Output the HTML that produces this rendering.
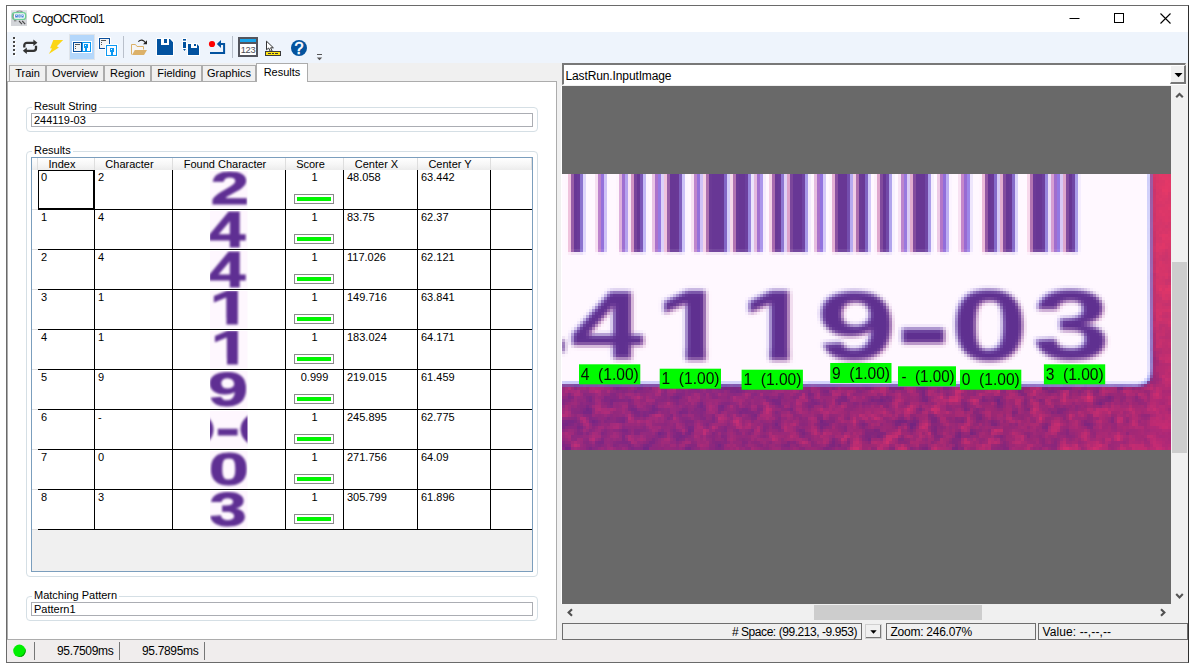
<!DOCTYPE html>
<html>
<head>
<meta charset="utf-8">
<title>CogOCRTool1</title>
<style>
html,body{margin:0;padding:0;background:#fff;}
body{width:1196px;height:665px;overflow:hidden;position:relative;font-family:"Liberation Sans",sans-serif;font-size:11px;color:#000;}
.abs{position:absolute;}
#win{position:absolute;left:6px;top:5px;width:1181px;height:656px;border:1px solid #6a6a6a;border-right-color:#2e2e2e;background:#f0f0f0;overflow:hidden;}
#pg{position:absolute;left:-7px;top:-6px;width:1196px;height:665px;}
#title{left:7px;top:6px;width:1181px;height:26px;background:#fff;}
#title .t{position:absolute;left:25.5px;top:5px;font-size:12px;line-height:16px;letter-spacing:-0.5px;white-space:nowrap;}
#tb{left:7px;top:32px;width:1181px;height:31px;background:#eef4fc;}
.tab{position:absolute;top:65px;height:16px;border:1px solid #acacac;border-bottom:none;background:#f0f0f0;font-size:11px;line-height:15px;text-align:center;white-space:nowrap;box-sizing:border-box;}
#tabsel{position:absolute;top:63px;height:19px;border:1px solid #acacac;border-bottom:none;background:#fff;font-size:11px;line-height:16px;text-align:center;box-sizing:border-box;z-index:3;}
#panel{left:7px;top:81px;width:550px;height:559px;background:#fff;border:1px solid #acacac;box-sizing:border-box;}
.gb{position:absolute;border:1px solid #d5dfe5;border-radius:4px;box-sizing:border-box;}
.gbl{position:absolute;background:#fff;font-size:11px;line-height:13px;padding:0 2px 0 2px;white-space:nowrap;}
.tf{position:absolute;border:1px solid #abadb3;background:#fff;box-sizing:border-box;font-size:11px;line-height:12px;padding-left:2px;white-space:nowrap;}
#grid{left:31px;top:157px;width:502px;height:415px;border:1px solid #7b9ebd;background:#f0f0f0;box-sizing:border-box;overflow:hidden;}
.hd{position:absolute;height:12px;font-size:11px;line-height:12px;text-align:center;background:linear-gradient(#fff,#f6f6f6 55%,#ececec);border-right:1px solid #dedede;box-sizing:border-box;white-space:nowrap;}
.rh{position:absolute;left:32px;width:6px;height:40px;background:#fff;border-bottom:1px solid #e0e0e0;box-sizing:border-box;}
.cell{position:absolute;background:#fff;border-right:1px solid #000;border-bottom:1px solid #000;box-sizing:border-box;font-size:11px;line-height:12px;white-space:nowrap;overflow:hidden;}
.sc{position:absolute;left:0;width:57px;top:1px;text-align:center;}
.bar{position:absolute;left:8px;top:24px;width:40px;height:10px;border:1px solid #8a8a8a;background:#fff;box-sizing:border-box;}
.bar i{position:absolute;left:2px;top:2px;width:34px;height:4px;background:#00f800;}
.fc{position:absolute;left:37px;top:0;width:38px;height:39px;background:#fdf2fd;overflow:hidden;}
.fc .g{position:absolute;left:0;top:0;width:38px;text-align:center;font-weight:bold;font-size:52px;line-height:39px;color:#673494;transform:scaleX(1.35);filter:blur(0.6px);}
.sb{position:absolute;border:1px solid #6e6e6e;background:#f0f0f0;box-sizing:border-box;font-size:12px;line-height:15px;padding-top:1px;white-space:nowrap;}
.lab{position:absolute;background:#00e400;font-size:14.5px;line-height:17px;white-space:pre;color:#111;}
</style>
</head>
<body>
<div id="win"><div id="pg">

<!-- title bar -->
<div id="title" class="abs">
  <svg class="abs" style="left:4px;top:4px" width="16" height="16" viewBox="0 0 16 16">
    <defs><linearGradient id="ig" x1="0" x2="0" y1="0" y2="1"><stop offset="0" stop-color="#e4e6ea"/><stop offset="0.5" stop-color="#d0d2d7"/><stop offset="1" stop-color="#d4d6da"/></linearGradient></defs>
    <rect x="0" y="0" width="16" height="16" fill="url(#ig)"/>
    <rect x="1.400" y="2.600" width="13.200" height="6.800" rx="2.400" fill="#fff" stroke="#6fcf97" stroke-width="1.400"/>
    <path d="M2.700 3.800Q1.900 6.200 2.900 8.800" stroke="#666" stroke-width="0.700" fill="none"/>
    <path d="M5.500 1.500Q8.500 0.500 11.500 1.500" stroke="#666" stroke-width="0.800" fill="none"/>
    <path d="M4.200 4.400h2.600v3.200H4.200zM7.400 4.400h2.200v3.200H7.400zM10.400 4.400h2.200v3.200h-2.200z" fill="#2a6fd0" opacity="0.900"/>
    <path d="M5 5.400h1M8 6h1M11 5.600h1" stroke="#fff" stroke-width="0.800"/>
    <path d="M8 11l3 3.200M11.200 11l3 3.200" stroke="#4a4a4a" stroke-width="1.100"/>
    <path d="M3 10.800h2.400" stroke="#666" stroke-width="0.900"/>
  </svg>
  <div class="t">CogOCRTool1</div>
  <svg class="abs" style="left:1062px;top:0" width="119" height="26" viewBox="0 0 119 26">
    <path d="M0.5 12.5h10" stroke="#000" stroke-width="1"/>
    <rect x="45.5" y="7.5" width="9" height="9" fill="none" stroke="#000" stroke-width="1"/>
    <path d="M91.5 7.5l10 10M101.5 7.5l-10 10" stroke="#000" stroke-width="1.1"/>
  </svg>
</div>

<!-- toolbar -->
<div id="tb" class="abs"></div>
<svg class="abs" style="left:7px;top:32px" width="330" height="31" viewBox="7 32 330 31">
  <!-- grip -->
  <g fill="#fff"><rect x="14" y="38" width="2" height="2"/><rect x="14" y="42" width="2" height="2"/><rect x="14" y="46" width="2" height="2"/><rect x="14" y="50" width="2" height="2"/><rect x="14" y="54" width="2" height="2"/></g>
  <g fill="#464646"><rect x="13" y="37" width="2" height="2"/><rect x="13" y="41" width="2" height="2"/><rect x="13" y="45" width="2" height="2"/><rect x="13" y="49" width="2" height="2"/><rect x="13" y="53" width="2" height="2"/></g>
  <!-- refresh / loop -->
  <g fill="none" stroke="#333" stroke-width="2.300" stroke-linejoin="round">
    <path d="M24.300 47.600v-2.200a2.600 2.600 0 0 1 2.600-2.600h7.400"/>
    <path d="M36 45.800v2.400a2.600 2.600 0 0 1-2.600 2.600h-7.400"/>
  </g>
  <path d="M33.400 39.600l4 3.200l-4 3.200z" fill="#333"/>
  <path d="M26.800 47.600l-4 3.200l4 3.200z" fill="#333"/>
  <!-- lightning -->
  <path d="M53.300 39.900h9.900l-6.400 6.300l2.100 1.200l-10.100 6.700l3.200-5.600l-1.900-0.300z" fill="#fbd616"/>
  <!-- selected button -->
  <rect x="69.5" y="34.5" width="25" height="25" fill="#b4d7fb" stroke="#dfe4ea" stroke-width="1"/>
  <!-- split view icon -->
  <rect x="72" y="41" width="20" height="12" fill="#fff"/>
  <rect x="82.5" y="42.5" width="8" height="9" fill="#fafcff" stroke="#0a98f2"/>
  <rect x="73.5" y="42.5" width="8" height="9" fill="#f4f4f4" stroke="#0b4f9d"/>
  <rect x="75" y="44" width="5" height="1" fill="#555"/><rect x="75" y="46" width="1" height="1" fill="#555"/><rect x="75" y="48" width="1" height="1" fill="#555"/>
  <path d="M84 44h4v4h-1v4h-2v-4h-1z" fill="#0a98f2"/><rect x="85" y="45" width="1" height="1" fill="#fff"/>
  <!-- floating icon -->
  <rect x="98" y="37" width="13" height="13" fill="#fff"/>
  <rect x="99.500" y="38.500" width="10" height="10" fill="#f4f4f4" stroke="#0b4f9d"/>
  <rect x="101" y="40" width="5" height="1" fill="#555"/><rect x="101" y="42" width="1" height="1" fill="#555"/><rect x="101" y="44" width="1" height="1" fill="#555"/>
  <rect x="105" y="44" width="13" height="13" fill="#fff"/>
  <rect x="106.500" y="45.500" width="10" height="10" fill="#fafcff" stroke="#0a98f2"/>
  <path d="M110 48h4v4h-1v4h-2v-4h-1z" fill="#0a98f2"/><rect x="111" y="49" width="1" height="1" fill="#fff"/>
  <!-- separator -->
  <rect x="123" y="36" width="1" height="22" fill="#b9c0cb"/>
  <!-- open folder -->
  <path d="M131.500 54.500v-10h4l1.500 2h6.500v3" fill="#f6f6f6" stroke="#dcb169" stroke-width="1"/>
  <path d="M132 55l2.800-5h12.200l-3 5z" fill="#dcb169"/>
  <path d="M138.300 41.600q3.800-3.600 7.400 1.400" fill="none" stroke="#222" stroke-width="1.100"/>
  <path d="M147 40.200v4h-4z" fill="#222"/>
  <!-- save -->
  <path d="M156 38h14.500l3.500 3.500v14.500h-18z" fill="#fff"/>
  <path d="M157 39h4v6h8v-6h1l3 3.200v12.800h-16z" fill="#02529f"/>
  <rect x="164" y="39" width="3" height="4" fill="#02529f"/>
  <!-- save as -->
  <path d="M182 38h5v11l-2.500 3l-2.500-3z" fill="#fff"/>
  <rect x="183" y="39" width="3" height="1.600" fill="#02529f"/>
  <rect x="183" y="42" width="3" height="6" fill="#02529f"/>
  <path d="M183 49h3l-1.500 2z" fill="#02529f"/>
  <path d="M187 43h10.500l2.500 2.500v10.500h-13z" fill="#fff"/>
  <path d="M188 44h3v4h6v-4l2 2.200v8.800h-11z" fill="#02529f"/>
  <rect x="194" y="44" width="2" height="2" fill="#02529f"/>
  <!-- red dot + return arrow -->
  <circle cx="212" cy="44" r="3.100" fill="#ff0000"/>
  <path d="M210 52.900h14.100v-9h-3.500" fill="none" stroke="#02529f" stroke-width="2"/>
  <path d="M216.800 44l4.200-4v8z" fill="#02529f"/>
  <!-- separator -->
  <rect x="232" y="36" width="1" height="22" fill="#b9c0cb"/>
  <!-- 123 icon -->
  <rect x="238" y="37" width="20" height="20" fill="#53555e"/>
  <rect x="240" y="39" width="16" height="3" fill="#18a5ec"/>
  <rect x="240" y="44" width="16" height="11" fill="#fff"/>
  <text x="248" y="53" font-family="Liberation Sans, sans-serif" font-size="9.300" text-anchor="middle" fill="#4a4c55" letter-spacing="-0.400">123</text>
  <!-- pointer + ruler -->
  <path d="M266.500 41.200v8.600l2.200-1.800l1.500 3.300h2l-1.600-3.500h2.800z" fill="#fff" stroke="#333" stroke-width="1"/>
  <rect x="265.500" y="51.500" width="15" height="4" fill="#ffe512" stroke="#3a3a3a" stroke-width="1"/>
  <path d="M268 53.500h3M272 53.500h2M275 53.500h3" stroke="#3a3a3a" stroke-width="1"/>
  <!-- help -->
  <circle cx="299" cy="48" r="8" fill="#03539e"/>
  <text x="299" y="53.900" font-family="Liberation Sans, sans-serif" font-size="16" text-anchor="middle" fill="#fff" stroke="#fff" stroke-width="0.600">?</text>
  <!-- overflow -->
  <rect x="317" y="54" width="5" height="1" fill="#555"/>
  <path d="M316.800 57.500h5.400l-2.700 2.700z" fill="#555"/>
</svg>


<!-- tabs -->
<div id="panel" class="abs"></div>
<div class="tab" style="left:9px;width:37px">Train</div>
<div class="tab" style="left:46px;width:58px">Overview</div>
<div class="tab" style="left:104px;width:47px">Region</div>
<div class="tab" style="left:151px;width:51px">Fielding</div>
<div class="tab" style="left:202px;width:54px">Graphics</div>
<div id="tabsel" style="left:256px;width:52px">Results</div>


<div class="gb" style="left:26px;top:107px;width:512px;height:25px"></div>
<div class="gbl" style="left:32px;top:100px">Result String</div>
<div class="tf" style="left:31px;top:113px;width:502px;height:14px">244119-03</div>
<div class="gb" style="left:26px;top:151px;width:512px;height:426px"></div>
<div class="gbl" style="left:32px;top:144px">Results</div>
<div class="gb" style="left:26px;top:596px;width:512px;height:25px"></div>
<div class="gbl" style="left:32px;top:589px">Matching Pattern</div>
<div class="tf" style="left:31px;top:602px;width:502px;height:14px">Pattern1</div>
<div id="grid" class="abs"><div class="abs" style="left:-32px;top:-158px">
<div class="hd" style="left:32px;top:158px;width:6px"></div>
<div class="hd" style="left:38px;top:158px;width:57px;padding-right:8px;">Index</div>
<div class="hd" style="left:95px;top:158px;width:78px;padding-right:8px;">Character</div>
<div class="hd" style="left:173px;top:158px;width:113px;padding-right:8px;">Found Character</div>
<div class="hd" style="left:286px;top:158px;width:58px;padding-right:8px;">Score</div>
<div class="hd" style="left:344px;top:158px;width:74px;padding-right:8px;">Center X</div>
<div class="hd" style="left:418px;top:158px;width:73px;padding-right:8px;">Center Y</div>
<div class="hd" style="left:491px;top:158px;width:41px;"></div>
<div class="rh" style="top:170px"></div>
<div class="cell" style="left:38px;top:170px;width:57px;height:40px;padding:1px 0 0 3px">0</div>
<div class="cell" style="left:95px;top:170px;width:78px;height:40px;padding:1px 0 0 3px">2</div>
<div class="cell" style="left:173px;top:170px;width:113px;height:40px"></div>
<div class="cell" style="left:286px;top:170px;width:58px;height:40px;text-align:center;"><span class="sc">1</span><span class="bar"><i></i></span></div>
<div class="cell" style="left:344px;top:170px;width:74px;height:40px;padding:1px 0 0 3px">48.058</div>
<div class="cell" style="left:418px;top:170px;width:73px;height:40px;padding:1px 0 0 3px">63.442</div>
<div class="cell" style="left:491px;top:170px;width:41px;height:40px;border-right:none"></div>
<div class="rh" style="top:210px"></div>
<div class="cell" style="left:38px;top:210px;width:57px;height:40px;padding:1px 0 0 3px">1</div>
<div class="cell" style="left:95px;top:210px;width:78px;height:40px;padding:1px 0 0 3px">4</div>
<div class="cell" style="left:173px;top:210px;width:113px;height:40px"></div>
<div class="cell" style="left:286px;top:210px;width:58px;height:40px;text-align:center;"><span class="sc">1</span><span class="bar"><i></i></span></div>
<div class="cell" style="left:344px;top:210px;width:74px;height:40px;padding:1px 0 0 3px">83.75</div>
<div class="cell" style="left:418px;top:210px;width:73px;height:40px;padding:1px 0 0 3px">62.37</div>
<div class="cell" style="left:491px;top:210px;width:41px;height:40px;border-right:none"></div>
<div class="rh" style="top:250px"></div>
<div class="cell" style="left:38px;top:250px;width:57px;height:40px;padding:1px 0 0 3px">2</div>
<div class="cell" style="left:95px;top:250px;width:78px;height:40px;padding:1px 0 0 3px">4</div>
<div class="cell" style="left:173px;top:250px;width:113px;height:40px"></div>
<div class="cell" style="left:286px;top:250px;width:58px;height:40px;text-align:center;"><span class="sc">1</span><span class="bar"><i></i></span></div>
<div class="cell" style="left:344px;top:250px;width:74px;height:40px;padding:1px 0 0 3px">117.026</div>
<div class="cell" style="left:418px;top:250px;width:73px;height:40px;padding:1px 0 0 3px">62.121</div>
<div class="cell" style="left:491px;top:250px;width:41px;height:40px;border-right:none"></div>
<div class="rh" style="top:290px"></div>
<div class="cell" style="left:38px;top:290px;width:57px;height:40px;padding:1px 0 0 3px">3</div>
<div class="cell" style="left:95px;top:290px;width:78px;height:40px;padding:1px 0 0 3px">1</div>
<div class="cell" style="left:173px;top:290px;width:113px;height:40px"></div>
<div class="cell" style="left:286px;top:290px;width:58px;height:40px;text-align:center;"><span class="sc">1</span><span class="bar"><i></i></span></div>
<div class="cell" style="left:344px;top:290px;width:74px;height:40px;padding:1px 0 0 3px">149.716</div>
<div class="cell" style="left:418px;top:290px;width:73px;height:40px;padding:1px 0 0 3px">63.841</div>
<div class="cell" style="left:491px;top:290px;width:41px;height:40px;border-right:none"></div>
<div class="rh" style="top:330px"></div>
<div class="cell" style="left:38px;top:330px;width:57px;height:40px;padding:1px 0 0 3px">4</div>
<div class="cell" style="left:95px;top:330px;width:78px;height:40px;padding:1px 0 0 3px">1</div>
<div class="cell" style="left:173px;top:330px;width:113px;height:40px"></div>
<div class="cell" style="left:286px;top:330px;width:58px;height:40px;text-align:center;"><span class="sc">1</span><span class="bar"><i></i></span></div>
<div class="cell" style="left:344px;top:330px;width:74px;height:40px;padding:1px 0 0 3px">183.024</div>
<div class="cell" style="left:418px;top:330px;width:73px;height:40px;padding:1px 0 0 3px">64.171</div>
<div class="cell" style="left:491px;top:330px;width:41px;height:40px;border-right:none"></div>
<div class="rh" style="top:370px"></div>
<div class="cell" style="left:38px;top:370px;width:57px;height:40px;padding:1px 0 0 3px">5</div>
<div class="cell" style="left:95px;top:370px;width:78px;height:40px;padding:1px 0 0 3px">9</div>
<div class="cell" style="left:173px;top:370px;width:113px;height:40px"></div>
<div class="cell" style="left:286px;top:370px;width:58px;height:40px;text-align:center;"><span class="sc">0.999</span><span class="bar"><i></i></span></div>
<div class="cell" style="left:344px;top:370px;width:74px;height:40px;padding:1px 0 0 3px">219.015</div>
<div class="cell" style="left:418px;top:370px;width:73px;height:40px;padding:1px 0 0 3px">61.459</div>
<div class="cell" style="left:491px;top:370px;width:41px;height:40px;border-right:none"></div>
<div class="rh" style="top:410px"></div>
<div class="cell" style="left:38px;top:410px;width:57px;height:40px;padding:1px 0 0 3px">6</div>
<div class="cell" style="left:95px;top:410px;width:78px;height:40px;padding:1px 0 0 3px">-</div>
<div class="cell" style="left:173px;top:410px;width:113px;height:40px"></div>
<div class="cell" style="left:286px;top:410px;width:58px;height:40px;text-align:center;"><span class="sc">1</span><span class="bar"><i></i></span></div>
<div class="cell" style="left:344px;top:410px;width:74px;height:40px;padding:1px 0 0 3px">245.895</div>
<div class="cell" style="left:418px;top:410px;width:73px;height:40px;padding:1px 0 0 3px">62.775</div>
<div class="cell" style="left:491px;top:410px;width:41px;height:40px;border-right:none"></div>
<div class="rh" style="top:450px"></div>
<div class="cell" style="left:38px;top:450px;width:57px;height:40px;padding:1px 0 0 3px">7</div>
<div class="cell" style="left:95px;top:450px;width:78px;height:40px;padding:1px 0 0 3px">0</div>
<div class="cell" style="left:173px;top:450px;width:113px;height:40px"></div>
<div class="cell" style="left:286px;top:450px;width:58px;height:40px;text-align:center;"><span class="sc">1</span><span class="bar"><i></i></span></div>
<div class="cell" style="left:344px;top:450px;width:74px;height:40px;padding:1px 0 0 3px">271.756</div>
<div class="cell" style="left:418px;top:450px;width:73px;height:40px;padding:1px 0 0 3px">64.09</div>
<div class="cell" style="left:491px;top:450px;width:41px;height:40px;border-right:none"></div>
<div class="rh" style="top:490px"></div>
<div class="cell" style="left:38px;top:490px;width:57px;height:40px;padding:1px 0 0 3px">8</div>
<div class="cell" style="left:95px;top:490px;width:78px;height:40px;padding:1px 0 0 3px">3</div>
<div class="cell" style="left:173px;top:490px;width:113px;height:40px"></div>
<div class="cell" style="left:286px;top:490px;width:58px;height:40px;text-align:center;"><span class="sc">1</span><span class="bar"><i></i></span></div>
<div class="cell" style="left:344px;top:490px;width:74px;height:40px;padding:1px 0 0 3px">305.799</div>
<div class="cell" style="left:418px;top:490px;width:73px;height:40px;padding:1px 0 0 3px">61.896</div>
<div class="cell" style="left:491px;top:490px;width:41px;height:40px;border-right:none"></div>
<svg class="abs" style="left:173px;top:170px" width="112" height="360" viewBox="0 0 112 360" font-family="Liberation Sans, sans-serif">
<defs><filter id="fb" x="-10%" y="-10%" width="120%" height="120%" color-interpolation-filters="sRGB"><feGaussianBlur stdDeviation="0.8"/></filter><clipPath id="f1"><polygon points="0,-80 37.6,-80 37.6,3 22.6,3 22.6,-13 0,-13"/></clipPath><clipPath id="r0"><rect x="37" y="1" width="37.500" height="37.500"/></clipPath><clipPath id="r1"><rect x="37" y="41" width="37.500" height="37.500"/></clipPath><clipPath id="r2"><rect x="37" y="81" width="37.500" height="37.500"/></clipPath><clipPath id="r3"><rect x="37" y="121" width="37.500" height="37.500"/></clipPath><clipPath id="r4"><rect x="37" y="161" width="37.500" height="37.500"/></clipPath><clipPath id="r5"><rect x="37" y="201" width="37.500" height="37.500"/></clipPath><clipPath id="r6"><rect x="37" y="241" width="37.500" height="37.500"/></clipPath><clipPath id="r7"><rect x="37" y="281" width="37.500" height="37.500"/></clipPath><clipPath id="r8"><rect x="37" y="321" width="37.500" height="37.500"/></clipPath></defs>
<rect x="37" y="1" width="37.500" height="37.500" fill="#fef7fe"/><g clip-path="url(#r0)"><g filter="url(#fb)"><text transform="matrix(0.6882 0 0 0.4597 37.72 34.34)" font-size="100" font-weight="bold" fill="#5f2f93"  stroke="#5f2f93" stroke-width="2">2</text></g></g>
<rect x="37" y="41" width="37.500" height="37.500" fill="#fef7fe"/><g clip-path="url(#r1)"><g filter="url(#fb)"><text transform="matrix(0.6545 0 0 0.5014 35.95 76.60)" font-size="100" font-weight="bold" fill="#5f2f93"  stroke="#5f2f93" stroke-width="2">4</text></g></g>
<rect x="37" y="81" width="37.500" height="37.500" fill="#fef7fe"/><g clip-path="url(#r2)"><g filter="url(#fb)"><text transform="matrix(0.6545 0 0 0.4944 35.95 116.81)" font-size="100" font-weight="bold" fill="#5f2f93"  stroke="#5f2f93" stroke-width="2">4</text></g></g>
<rect x="37" y="121" width="37.500" height="37.500" fill="#fef7fe"/><g clip-path="url(#r3)"><g filter="url(#fb)"><text transform="matrix(0.7531 0 0 0.4803 36.48 154.32)" font-size="100" font-weight="bold" fill="#5f2f93" clip-path="url(#f1)" stroke="#5f2f93" stroke-width="2">1</text></g></g>
<rect x="37" y="161" width="37.500" height="37.500" fill="#fef7fe"/><g clip-path="url(#r4)"><g filter="url(#fb)"><text transform="matrix(0.7219 0 0 0.4718 37.67 194.13)" font-size="100" font-weight="bold" fill="#5f2f93" clip-path="url(#f1)" stroke="#5f2f93" stroke-width="2">1</text></g></g>
<rect x="37" y="201" width="37.500" height="37.500" fill="#fef7fe"/><g clip-path="url(#r5)"><g filter="url(#fb)"><text transform="matrix(0.7200 0 0 0.4726 35.04 236.35)" font-size="100" font-weight="bold" fill="#5f2f93"  stroke="#5f2f93" stroke-width="2">9</text></g></g>
<rect x="37" y="241" width="37.500" height="37.500" fill="#fef7fe"/><g clip-path="url(#r6)"><g filter="url(#fb)"><text transform="matrix(0.7222 0 0 0.4857 42.63 275.13)" font-size="100" font-weight="bold" fill="#5f2f93"  stroke="#5f2f93" stroke-width="2">-</text><ellipse cx="27" cy="259.5" rx="13.500" ry="15" fill="#5f2f93"/><ellipse cx="85" cy="259.3" rx="17.500" ry="16.500" fill="#5f2f93"/></g></g>
<rect x="37" y="281" width="37.500" height="37.500" fill="#fef7fe"/><g clip-path="url(#r7)"><g filter="url(#fb)"><text transform="matrix(0.7224 0 0 0.4671 35.63 314.67)" font-size="100" font-weight="bold" fill="#5f2f93"  stroke="#5f2f93" stroke-width="2">0</text></g></g>
<rect x="37" y="321" width="37.500" height="37.500" fill="#fef7fe"/><g clip-path="url(#r8)"><g filter="url(#fb)"><text transform="matrix(0.6673 0 0 0.4726 36.53 356.35)" font-size="100" font-weight="bold" fill="#5f2f93"  stroke="#5f2f93" stroke-width="2">3</text></g></g>
</svg>
<div class="abs" style="left:38px;top:170px;width:56px;height:39px;border:1px solid #000;box-sizing:border-box"></div>
</div></div>

<div class="abs" style="left:562px;top:63px;width:624px;height:22px;background:#fff;border:1px solid #a0a0a0;border-top:2px solid #787878;border-left:2px solid #787878;border-right-color:#fff;border-bottom-color:#fff;box-sizing:border-box"></div>
<div class="abs" style="left:565.500px;top:68.500px;font-size:12px;line-height:15px;letter-spacing:-0.120px;white-space:nowrap">LastRun.InputImage</div>
<div class="abs" style="left:1170px;top:65px;width:16px;height:19px;background:#f0f0f0;border:1px solid #fff;border-right:2px solid #787878;border-bottom:2px solid #787878;box-sizing:border-box"></div>
<svg class="abs" style="left:1173.500px;top:72px" width="9" height="6" viewBox="0 0 9 6"><path d="M0.500 1h8l-4 4.200z" fill="#000"/></svg>
<div class="abs" style="left:561px;top:86px;width:1px;height:518px;background:#fff"></div>
<div class="abs" style="left:562px;top:86px;width:609px;height:518px;background:#696969"></div>
<svg class="abs" style="left:562px;top:174px" width="609" height="276" viewBox="0 0 609 276" font-family="Liberation Sans, sans-serif">
<defs>
<filter id="bl" x="-10%" y="-10%" width="120%" height="120%" color-interpolation-filters="sRGB"><feGaussianBlur stdDeviation="2"/></filter>
<filter id="bb" x="-5%" y="-5%" width="110%" height="110%" color-interpolation-filters="sRGB"><feGaussianBlur stdDeviation="1.5 1.3"/></filter>
<linearGradient id="tg" x1="0" x2="1" y1="0" y2="0"><stop offset="0" stop-color="#e07ab0"/><stop offset="0.45" stop-color="#8a55c8"/><stop offset="1" stop-color="#7468f0"/></linearGradient>
<filter id="nz" x="0" y="0" width="100%" height="100%" color-interpolation-filters="sRGB"><feTurbulence type="fractalNoise" baseFrequency="0.1" numOctaves="2" seed="7" result="t"/><feColorMatrix in="t" type="matrix" values="0 0 0 0 0.85  0 0 0 0 0.19  0 0 0 0 0.43  2.2 0 0 0 -0.85"/></filter>
<filter id="nz2" x="0" y="0" width="100%" height="100%" color-interpolation-filters="sRGB"><feTurbulence type="fractalNoise" baseFrequency="0.09" numOctaves="2" seed="23" result="t"/><feColorMatrix in="t" type="matrix" values="0 0 0 0 0.43  0 0 0 0 0.14  0 0 0 0 0.50  0 2.2 0 0 -0.85"/></filter>
<linearGradient id="vg" x1="0" x2="1" y1="0" y2="1"><stop offset="0.55" stop-color="#7a2a98" stop-opacity="0.25"/><stop offset="0.8" stop-color="#c02878" stop-opacity="0"/><stop offset="1" stop-color="#e02c70" stop-opacity="0.4"/></linearGradient>
<linearGradient id="rg" x1="0" x2="0" y1="0" y2="1"><stop offset="0" stop-color="#f83c60" stop-opacity="0.75"/><stop offset="0.45" stop-color="#f03a64" stop-opacity="0.65"/><stop offset="0.8" stop-color="#d02c70" stop-opacity="0.35"/><stop offset="1" stop-color="#c02878" stop-opacity="0.3"/></linearGradient>
<filter id="b1" x="-5%" y="-5%" width="110%" height="110%" color-interpolation-filters="sRGB"><feGaussianBlur stdDeviation="0.9"/></filter>
<filter id="px" x="0" y="0" width="100%" height="100%" color-interpolation-filters="sRGB"><feFlood x="1" y="1" width="1" height="1" flood-color="#000"/><feComposite width="3" height="3"/><feTile result="m"/><feComposite in="SourceGraphic" in2="m" operator="in"/><feMorphology operator="dilate" radius="1"/></filter>
<clipPath id="c1"><polygon points="0,-80 37.2,-80 37.2,3 22.9,3 22.9,-13 0,-13"/></clipPath>
<clipPath id="mg"><path d="M0 210.5L574 211.5Q589.5 211.5 589.5 196L588.7 0H609V277H0Z"/></clipPath>
</defs>
<g filter="url(#px)">
<rect width="609" height="276" fill="#fff8ff"/>
<g filter="url(#bb)">
<rect x="7.4" y="-4" width="3.2" height="82.5" fill="#e070a8" opacity="0.7"/><rect x="18.5" y="-4" width="3.2" height="82.5" fill="#6a60f0" opacity="0.7"/><rect x="10" y="-4" width="9.1" height="82" fill="#683795"/>
<rect x="35.7" y="-4" width="7.4" height="82" fill="url(#tg)" opacity="0.9"/>
<rect x="58.3" y="-4" width="6.7" height="82" fill="url(#tg)" opacity="0.9"/>
<rect x="69.1" y="-4" width="3.2" height="82.5" fill="#e070a8" opacity="0.7"/><rect x="79.5" y="-4" width="3.2" height="82.5" fill="#6a60f0" opacity="0.7"/><rect x="71.7" y="-4" width="8.4" height="82" fill="#683795"/>
<rect x="91.8" y="-4" width="7.8" height="82" fill="url(#tg)" opacity="0.9"/>
<rect x="103.4" y="-4" width="3.2" height="82.5" fill="#e070a8" opacity="0.7"/><rect x="118.2" y="-4" width="3.2" height="82.5" fill="#6a60f0" opacity="0.7"/><rect x="106" y="-4" width="12.8" height="82" fill="#683795"/>
<rect x="131.9" y="-4" width="7.2" height="82" fill="url(#tg)" opacity="0.9"/>
<rect x="143" y="-4" width="3.2" height="82.5" fill="#e070a8" opacity="0.7"/><rect x="162.9" y="-4" width="3.2" height="82.5" fill="#6a60f0" opacity="0.7"/><rect x="145.6" y="-4" width="17.9" height="82" fill="#683795"/>
<rect x="170.2" y="-4" width="3.2" height="82.5" fill="#e070a8" opacity="0.7"/><rect x="185.9" y="-4" width="3.2" height="82.5" fill="#6a60f0" opacity="0.7"/><rect x="172.8" y="-4" width="13.7" height="82" fill="#683795"/>
<rect x="193.5" y="-4" width="6.9" height="82" fill="url(#tg)" opacity="0.9"/>
<rect x="208.9" y="-4" width="3.2" height="82.5" fill="#e070a8" opacity="0.7"/><rect x="219.4" y="-4" width="3.2" height="82.5" fill="#6a60f0" opacity="0.7"/><rect x="211.5" y="-4" width="8.5" height="82" fill="#683795"/>
<rect x="225.4" y="-4" width="3.2" height="82.5" fill="#e070a8" opacity="0.7"/><rect x="242.4" y="-4" width="3.2" height="82.5" fill="#6a60f0" opacity="0.7"/><rect x="228" y="-4" width="15" height="82" fill="#683795"/>
<rect x="253.6" y="-4" width="8.3" height="82" fill="url(#tg)" opacity="0.9"/>
<rect x="270.9" y="-4" width="3.2" height="82.5" fill="#e070a8" opacity="0.7"/><rect x="286.9" y="-4" width="3.2" height="82.5" fill="#6a60f0" opacity="0.7"/><rect x="273.5" y="-4" width="14" height="82" fill="#683795"/>
<rect x="293" y="-4" width="3.2" height="82.5" fill="#e070a8" opacity="0.7"/><rect x="304" y="-4" width="3.2" height="82.5" fill="#6a60f0" opacity="0.7"/><rect x="295.6" y="-4" width="9" height="82" fill="#683795"/>
<rect x="315.6" y="-4" width="3.2" height="82.5" fill="#e070a8" opacity="0.7"/><rect x="326.1" y="-4" width="3.2" height="82.5" fill="#6a60f0" opacity="0.7"/><rect x="318.2" y="-4" width="8.5" height="82" fill="#683795"/>
<rect x="338.9" y="-4" width="6.7" height="82" fill="url(#tg)" opacity="0.9"/>
<rect x="348.7" y="-4" width="3.2" height="82.5" fill="#e070a8" opacity="0.7"/><rect x="365.3" y="-4" width="3.2" height="82.5" fill="#6a60f0" opacity="0.7"/><rect x="351.3" y="-4" width="14.6" height="82" fill="#683795"/>
<rect x="377" y="-4" width="8.7" height="82" fill="url(#tg)" opacity="0.9"/>
<rect x="398.8" y="-4" width="9.1" height="82" fill="url(#tg)" opacity="0.9"/>
<rect x="421.2" y="-4" width="3.2" height="82.5" fill="#e070a8" opacity="0.7"/><rect x="432.8" y="-4" width="3.2" height="82.5" fill="#6a60f0" opacity="0.7"/><rect x="423.8" y="-4" width="9.6" height="82" fill="#683795"/>
<rect x="438.7" y="-4" width="3.2" height="82.5" fill="#e070a8" opacity="0.7"/><rect x="450.7" y="-4" width="3.2" height="82.5" fill="#6a60f0" opacity="0.7"/><rect x="441.3" y="-4" width="10" height="82" fill="#683795"/>
<rect x="467.2" y="-4" width="3.2" height="82.5" fill="#e070a8" opacity="0.7"/><rect x="482.9" y="-4" width="3.2" height="82.5" fill="#6a60f0" opacity="0.7"/><rect x="469.8" y="-4" width="13.7" height="82" fill="#683795"/>
<rect x="489.6" y="-4" width="9.1" height="82" fill="url(#tg)" opacity="0.9"/>
<rect x="501.6" y="-4" width="3.2" height="82.5" fill="#e070a8" opacity="0.7"/><rect x="512.3" y="-4" width="3.2" height="82.5" fill="#6a60f0" opacity="0.7"/><rect x="504.2" y="-4" width="8.7" height="82" fill="#683795"/>
</g>
<g clip-path="url(#mg)"><rect width="609" height="277" fill="#9c2874"/><rect width="609" height="277" filter="url(#nz)"/><rect width="609" height="277" filter="url(#nz2)"/><rect width="609" height="277" fill="url(#vg)"/><rect x="588" y="0" width="21" height="277" fill="url(#rg)"/></g>
<g filter="url(#b1)" fill="none"><path d="M0 211.800L574 212.800Q590.800 212.800 590.800 196L590 0" stroke="#4a2a88" stroke-width="2.200" opacity="0.5"/><path d="M0 209.600L574 210.600Q588.600 210.600 588.600 196L587.800 0" stroke="#9aa2f4" stroke-width="2.800" opacity="0.9"/></g>
<g filter="url(#bl)">
<g transform="translate(-1.300 -1)" opacity="0.5"><text transform="matrix(1.3113 0 0 0.9667 8.78 185.30)" font-size="100" font-weight="bold" fill="#5050f0" >4</text>
<text transform="matrix(1.3400 0 0 0.9986 93.52 186.00)" font-size="100" font-weight="bold" fill="#5050f0" clip-path="url(#c1)">1</text>
<text transform="matrix(1.2833 0 0 0.9986 178.92 186.00)" font-size="100" font-weight="bold" fill="#5050f0" clip-path="url(#c1)">1</text>
<text transform="matrix(1.4292 0 0 0.9676 254.68 185.33)" font-size="100" font-weight="bold" fill="#5050f0" >9</text>
<text transform="matrix(1.6320 0 0 1.1667 334.27 191.53)" font-size="100" font-weight="bold" fill="#5050f0" >-</text>
<text transform="matrix(1.3872 0 0 0.9958 389.05 186.30)" font-size="100" font-weight="bold" fill="#5050f0" >0</text>
<text transform="matrix(1.3880 0 0 0.9817 470.92 185.32)" font-size="100" font-weight="bold" fill="#5050f0" >3</text>
</g>
<g transform="translate(1.300 1)" opacity="0.5"><text transform="matrix(1.3113 0 0 0.9667 8.78 185.30)" font-size="100" font-weight="bold" fill="#e85a98" >4</text>
<text transform="matrix(1.3400 0 0 0.9986 93.52 186.00)" font-size="100" font-weight="bold" fill="#e85a98" clip-path="url(#c1)">1</text>
<text transform="matrix(1.2833 0 0 0.9986 178.92 186.00)" font-size="100" font-weight="bold" fill="#e85a98" clip-path="url(#c1)">1</text>
<text transform="matrix(1.4292 0 0 0.9676 254.68 185.33)" font-size="100" font-weight="bold" fill="#e85a98" >9</text>
<text transform="matrix(1.6320 0 0 1.1667 334.27 191.53)" font-size="100" font-weight="bold" fill="#e85a98" >-</text>
<text transform="matrix(1.3872 0 0 0.9958 389.05 186.30)" font-size="100" font-weight="bold" fill="#e85a98" >0</text>
<text transform="matrix(1.3880 0 0 0.9817 470.92 185.32)" font-size="100" font-weight="bold" fill="#e85a98" >3</text>
</g>
<text transform="matrix(1.3113 0 0 0.9667 8.78 185.30)" font-size="100" font-weight="bold" fill="#5f3090" >4</text>
<text transform="matrix(1.3400 0 0 0.9986 93.52 186.00)" font-size="100" font-weight="bold" fill="#5f3090" clip-path="url(#c1)">1</text>
<text transform="matrix(1.2833 0 0 0.9986 178.92 186.00)" font-size="100" font-weight="bold" fill="#5f3090" clip-path="url(#c1)">1</text>
<text transform="matrix(1.4292 0 0 0.9676 254.68 185.33)" font-size="100" font-weight="bold" fill="#5f3090" >9</text>
<text transform="matrix(1.6320 0 0 1.1667 334.27 191.53)" font-size="100" font-weight="bold" fill="#5f3090" >-</text>
<text transform="matrix(1.3872 0 0 0.9958 389.05 186.30)" font-size="100" font-weight="bold" fill="#5f3090" >0</text>
<text transform="matrix(1.3880 0 0 0.9817 470.92 185.32)" font-size="100" font-weight="bold" fill="#5f3090" >3</text>
<rect x="-2" y="166" width="4.500" height="12" fill="#5f3090"/>
</g>
</g>
<rect x="17" y="190.3" width="61.3" height="20" fill="#00fb00"/><text x="18.8" y="205.9" font-size="16" fill="#061006" xml:space="preserve" textLength="58" lengthAdjust="spacingAndGlyphs">4  (1.00)</text>
<rect x="97.7" y="194.7" width="61.3" height="20" fill="#00fb00"/><text x="99.5" y="210.3" font-size="16" fill="#061006" xml:space="preserve" textLength="58" lengthAdjust="spacingAndGlyphs">1  (1.00)</text>
<rect x="179.6" y="195.7" width="61.3" height="20" fill="#00fb00"/><text x="181.4" y="211.3" font-size="16" fill="#061006" xml:space="preserve" textLength="58" lengthAdjust="spacingAndGlyphs">1  (1.00)</text>
<rect x="268.2" y="189" width="61.3" height="20" fill="#00fb00"/><text x="270" y="204.6" font-size="16" fill="#061006" xml:space="preserve" textLength="58" lengthAdjust="spacingAndGlyphs">9  (1.00)</text>
<rect x="336" y="192.3" width="58" height="20" fill="#00fb00"/><text x="339.6" y="207.9" font-size="16" fill="#061006" xml:space="preserve" textLength="53" lengthAdjust="spacingAndGlyphs">-  (1.00)</text>
<rect x="398" y="195.7" width="61.3" height="20" fill="#00fb00"/><text x="399.8" y="211.3" font-size="16" fill="#061006" xml:space="preserve" textLength="58" lengthAdjust="spacingAndGlyphs">0  (1.00)</text>
<rect x="481.9" y="190.3" width="61.3" height="20" fill="#00fb00"/><text x="483.7" y="205.9" font-size="16" fill="#061006" xml:space="preserve" textLength="58" lengthAdjust="spacingAndGlyphs">3  (1.00)</text>
</svg>
<div class="abs" style="left:1171px;top:86px;width:17px;height:518px;background:#f0f0f0"></div>
<div class="abs" style="left:1172px;top:262px;width:15px;height:191px;background:#cdcdcd"></div>
<svg class="abs" style="left:1171px;top:86px" width="17" height="518" viewBox="0 0 17 518"><path d="M5.200 11.300l3.300-3.400l3.300 3.400" fill="none" stroke="#555" stroke-width="2.100"/><path d="M5.200 508l3.300 3.400l3.300-3.400" fill="none" stroke="#555" stroke-width="2.100"/></svg>
<div class="abs" style="left:562px;top:604px;width:626px;height:17px;background:#f0f0f0"></div>
<div class="abs" style="left:814px;top:605px;width:168px;height:15px;background:#cdcdcd"></div>
<svg class="abs" style="left:562px;top:604px" width="609" height="17" viewBox="0 0 609 17"><path d="M10 5.200l-3.400 3.300l3.400 3.300" fill="none" stroke="#505050" stroke-width="2.100"/><path d="M599 5.200l3.400 3.300l-3.400 3.300" fill="none" stroke="#505050" stroke-width="2.100"/></svg>
<div class="sb" style="left:562px;top:623px;width:300px;height:17px;text-align:right;padding-right:4px;letter-spacing:-0.440px">#&nbsp;Space: (99.213, -9.953)</div>
<div class="abs" style="left:865px;top:624px;width:17px;height:15px;background:#f0f0f0;border:1px solid #fff;border-right:2px solid #787878;border-bottom:2px solid #787878;box-sizing:border-box;outline:1px solid #d0d0d0;outline-offset:-1px"></div>
<svg class="abs" style="left:870px;top:630px" width="7" height="4" viewBox="0 0 7 4"><path d="M0.300 0.300h6.400l-3.200 3.400z" fill="#000"/></svg>
<div class="sb" style="left:886px;top:623px;width:150px;height:17px;padding-left:3.500px;letter-spacing:-0.250px">Zoom: 246.07%</div>
<div class="sb" style="left:1038px;top:623px;width:150px;height:17px;padding-left:3.500px;letter-spacing:0.100px">Value: --,--,--</div>

<div class="abs" style="left:7px;top:640px;width:1181px;height:22px;background:#f0eded"></div>
<svg class="abs" style="left:7px;top:640px" width="220" height="21" viewBox="7 640 220 21">
  <circle cx="19.400" cy="650.800" r="6.200" fill="#00f000"/>
  <path d="M25.200 648.500A6.200 6.200 0 0 1 17.400 656.700A7.500 7.500 0 0 0 25.200 648.500z" fill="#009a00"/>
  <rect x="34" y="642" width="1" height="18" fill="#767676"/>
  <rect x="119" y="642" width="1" height="18" fill="#767676"/>
  <rect x="204" y="642" width="1" height="18" fill="#767676"/>
</svg>
<div class="abs" style="left:57px;top:644px;font-size:12px;line-height:15px;letter-spacing:-0.340px;white-space:nowrap">95.7509ms</div>
<div class="abs" style="left:142px;top:644px;font-size:12px;line-height:15px;letter-spacing:-0.340px;white-space:nowrap">95.7895ms</div>


</div></div>
</body>
</html>
